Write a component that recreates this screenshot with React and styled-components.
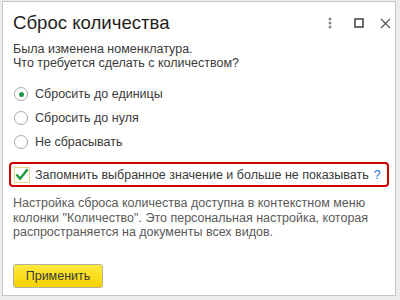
import styled, { createGlobalStyle } from 'styled-components';

const Global = createGlobalStyle`
  html, body {
    margin: 0;
    padding: 0;
    background: #ececec;
  }
  body {
    font-family: 'Liberation Sans', Arial, sans-serif;
  }
`;

const Screen = styled.div`
  width: 400px;
  height: 300px;
  padding: 1px 0 0 2px;
  box-sizing: border-box;
`;

const Window = styled.div`
  width: 394px;
  height: 295px;
  box-sizing: border-box;
  background: #fff;
  border: 1px solid #c6c6c6;
  display: flex;
  flex-direction: column;
`;

const Header = styled.div`
  display: flex;
  align-items: center;
  height: 40px;
  box-sizing: border-box;
  padding: 2px 0 0 10px;
`;

const Title = styled.h1`
  flex: 1;
  margin: 0;
  font-size: 18.6px;
  font-weight: normal;
  color: #1f1f1f;
`;

const HeaderButton = styled.button`
  width: ${(p) => p.$w || 26}px;
  height: 24px;
  border: 0;
  background: transparent;
  padding: 0;
  display: flex;
  align-items: center;
  justify-content: center;
  margin-right: ${(p) => p.$gap || 0}px;
`;

const Body = styled.div`
  padding: 0 10px;
  display: flex;
  flex-direction: column;
`;

const Intro = styled.p`
  margin: 0;
  font-size: 12.5px;
  line-height: 14px;
  color: #3a3a3a;
`;

const Radios = styled.div`
  display: flex;
  flex-direction: column;
  margin-top: 12px;
  padding-left: 1px;
`;

const RadioRow = styled.label`
  display: flex;
  align-items: center;
  height: 24px;
  font-size: 12.5px;
  color: #3a3a3a;
`;

const RadioCircle = styled.span`
  width: 14px;
  height: 14px;
  box-sizing: border-box;
  border-radius: 50%;
  border: 1px solid #a9a9a9;
  background: #fff;
  margin-right: 7px;
  display: flex;
  align-items: center;
  justify-content: center;
  &::after {
    content: '';
    width: 5px;
    height: 5px;
    border-radius: 50%;
    background: ${(p) => (p.$checked ? '#1e9a48' : 'transparent')};
  }
`;

const Highlight = styled.div`
  margin: 8px 0 0 -4px;
  width: 380px;
  height: 25px;
  box-sizing: border-box;
  border: 2px solid #d10000;
  border-radius: 4px;
  display: flex;
  align-items: center;
  padding-left: 3px;
  font-size: 12.5px;
  white-space: nowrap;
  color: #3a3a3a;
`;

const CheckBox = styled.span`
  width: 16px;
  height: 16px;
  box-sizing: border-box;
  border: 1px solid #e9d48a;
  background: #fff;
  margin-right: 5px;
  display: flex;
  align-items: center;
  justify-content: center;
`;

const Help = styled.span`
  color: #1c6fc7;
  margin-left: 5px;
`;

const Note = styled.p`
  margin: 9px 0 0;
  font-size: 12.5px;
  line-height: 14.5px;
  color: #5a5a5a;
`;

const Footer = styled.div`
  margin-top: auto;
  padding: 0 0 7px 10px;
`;

const ApplyButton = styled.button`
  width: 90px;
  height: 24px;
  border: 1px solid #b5b09a;
  border-radius: 3px;
  background: linear-gradient(#ffeb3d, #f6d300);
  font-family: inherit;
  font-size: 12.5px;
  color: #3a3a3a;
  padding: 0;
`;

const options = ['Сбросить до единицы', 'Сбросить до нуля', 'Не сбрасывать'];

export default function App() {
  return (
    <>
      <Global />
      <Screen>
        <Window>
          <Header>
            <Title>Сброс количества</Title>
            <HeaderButton $gap={3}>
              <svg width="4" height="12" viewBox="0 0 4 12">
                <circle cx="2" cy="2" r="1.5" fill="#8a8a8a" />
                <circle cx="2" cy="6" r="1.5" fill="#8a8a8a" />
                <circle cx="2" cy="10" r="1.5" fill="#8a8a8a" />
              </svg>
            </HeaderButton>
            <HeaderButton $gap={3}>
              <svg width="10" height="10" viewBox="0 0 10 10">
                <rect x="1" y="1" width="8" height="8" fill="none" stroke="#404040" strokeWidth="1.5" />
              </svg>
            </HeaderButton>
            <HeaderButton $w={20}>
              <svg width="11" height="11" viewBox="0 0 11 11">
                <path d="M1 1 L10 10 M10 1 L1 10" stroke="#505050" strokeWidth="1.1" />
              </svg>
            </HeaderButton>
          </Header>
          <Body>
            <Intro>
              Была изменена номенклатура.
              <br />
              Что требуется сделать с количеством?
            </Intro>
            <Radios>
              {options.map((o, i) => (
                <RadioRow key={o}>
                  <RadioCircle $checked={i === 0} />
                  {o}
                </RadioRow>
              ))}
            </Radios>
            <Highlight>
              <CheckBox>
                <svg width="15" height="13" viewBox="0 0 15 13">
                  <path d="M1.5 6.5 L5.5 11 L13.5 1" fill="none" stroke="#1a9a3a" strokeWidth="2.6" />
                </svg>
              </CheckBox>
              Запомнить выбранное значение и больше не показывать
              <Help>?</Help>
            </Highlight>
            <Note>
              Настройка сброса количества доступна в контекстном меню колонки "Количество". Это персональная
              настройка, которая распространяется на документы всех видов.
            </Note>
          </Body>
          <Footer>
            <ApplyButton>Применить</ApplyButton>
          </Footer>
        </Window>
      </Screen>
    </>
  );
}
